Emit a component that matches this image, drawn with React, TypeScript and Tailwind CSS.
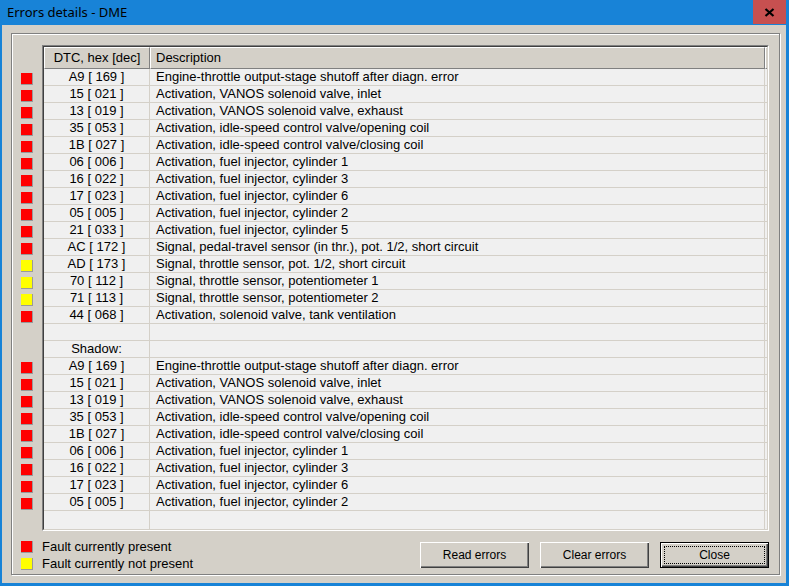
import React from "react";

type Row = { code: string; desc: string; color?: "red" | "yellow" };

const current: Row[] = [
  { code: "A9 [ 169 ]", desc: "Engine-throttle output-stage shutoff after diagn. error", color: "red" },
  { code: "15 [ 021 ]", desc: "Activation, VANOS solenoid valve, inlet", color: "red" },
  { code: "13 [ 019 ]", desc: "Activation, VANOS solenoid valve, exhaust", color: "red" },
  { code: "35 [ 053 ]", desc: "Activation, idle-speed control valve/opening coil", color: "red" },
  { code: "1B [ 027 ]", desc: "Activation, idle-speed control valve/closing coil", color: "red" },
  { code: "06 [ 006 ]", desc: "Activation, fuel injector, cylinder 1", color: "red" },
  { code: "16 [ 022 ]", desc: "Activation, fuel injector, cylinder 3", color: "red" },
  { code: "17 [ 023 ]", desc: "Activation, fuel injector, cylinder 6", color: "red" },
  { code: "05 [ 005 ]", desc: "Activation, fuel injector, cylinder 2", color: "red" },
  { code: "21 [ 033 ]", desc: "Activation, fuel injector, cylinder 5", color: "red" },
  { code: "AC [ 172 ]", desc: "Signal, pedal-travel sensor (in thr.), pot. 1/2, short circuit", color: "red" },
  { code: "AD [ 173 ]", desc: "Signal, throttle sensor, pot. 1/2, short circuit", color: "yellow" },
  { code: "70 [ 112 ]", desc: "Signal, throttle sensor, potentiometer 1", color: "yellow" },
  { code: "71 [ 113 ]", desc: "Signal, throttle sensor, potentiometer 2", color: "yellow" },
  { code: "44 [ 068 ]", desc: "Activation, solenoid valve, tank ventilation", color: "red" },
];

// shadow memory holds the first nine entries again
const rows: Row[] = [
  ...current,
  { code: "", desc: "" },
  { code: "Shadow:", desc: "" },
  ...current.slice(0, 9),
];

function Lamp({ color }: { color?: "red" | "yellow" }) {
  if (!color) return null;
  return (
    <div
      className={
        "w-[12px] h-[12px] border-r border-b border-[#9a9a9a] " +
        (color === "red" ? "bg-[#ff0000]" : "bg-[#ffff00]")
      }
    />
  );
}

function ClassicButton({ label, isDefault }: { label: string; isDefault?: boolean }) {
  if (isDefault) {
    return (
      <div className="w-[109px] h-[26px] border border-black">
        <div className="w-full h-full p-[3px] shadow-[inset_1px_1px_0_#fff,inset_-1px_-1px_0_#404040,inset_-2px_-2px_0_#808080]">
          <div className="w-full h-full border border-dotted border-black flex items-center justify-center">
            {label}
          </div>
        </div>
      </div>
    );
  }
  return (
    <div className="w-[109px] h-[26px] flex items-center justify-center shadow-[inset_1px_1px_0_#fff,inset_-1px_-1px_0_#404040,inset_-2px_-2px_0_#808080]">
      {label}
    </div>
  );
}

export default function App() {
  return (
    <div className="w-[789px] h-[586px] bg-[#1883d7] pl-[2px] pr-[3px] pb-[3px] flex flex-col font-['Liberation_Sans',Arial,sans-serif] text-[13px] text-black overflow-hidden">
      {/* title bar */}
      <div className="h-[25px] flex shrink-0">
        <div className="flex-1 flex items-center pl-[5px] font-['Noto_Sans','Open_Sans',sans-serif] text-[13px]">
          Errors details - DME
        </div>
        <div className="w-[33px] h-[24px] bg-[#c75050] flex items-center justify-center">
          <svg width="11" height="9" viewBox="0 0 11 9">
            <path d="M1.5 1 L9.5 8 M9.5 1 L1.5 8" stroke="#000" strokeWidth="2.2" />
          </svg>
        </div>
      </div>

      {/* client area */}
      <div className="flex-1 bg-[#d4d0c8] pt-[8px] pl-[9px]">
        <div className="w-[769px] h-[542px] border border-[#808080] shadow-[inset_1px_1px_0_#fff,1px_1px_0_#fff] flex flex-col pt-[11px]">
          {/* list section */}
          <div className="flex">
            <div className="w-[30px] pl-[9px] pt-[26px] flex flex-col">
              {rows.map((r, i) => (
                <div key={i} className="h-[17px] pt-[2px]">
                  <Lamp color={r.color} />
                </div>
              ))}
            </div>
            <div className="w-[727px] h-[486px] border border-t-[#808080] border-l-[#808080] border-r-white border-b-white">
              <div className="w-full h-full border border-t-[#404040] border-l-[#404040] border-r-[#d4d0c8] border-b-[#d4d0c8] bg-[#f0f0f0] flex flex-col overflow-hidden">
                {/* header */}
                <div className="h-[22px] flex shrink-0 bg-[#d4d0c8]">
                  <div className="w-[106px] flex items-center justify-center border-t border-l border-white border-r border-r-[#808080] border-b border-b-[#808080]">
                    DTC, hex [dec]
                  </div>
                  <div className="w-[615px] flex items-center pl-[5px] border-t border-l border-white border-r border-r-[#808080] border-b border-b-[#808080]">
                    Description
                  </div>
                  <div className="flex-1 border-t border-l border-white border-b border-b-[#808080]" />
                </div>
                {/* body */}
                <div className="flex-1 flex flex-col overflow-hidden">
                  {rows.map((r, i) => (
                    <div key={i} className="h-[17px] shrink-0 flex border-b border-[#d4d0c8]">
                      <div className="w-[106px] flex items-center justify-center border-r border-[#d4d0c8]">
                        {r.code}
                      </div>
                      <div className="w-[615px] flex items-center pl-[6px] border-r border-[#d4d0c8] whitespace-nowrap">
                        {r.desc}
                      </div>
                    </div>
                  ))}
                  <div className="flex-1 flex">
                    <div className="w-[106px] border-r border-[#d4d0c8]" />
                    <div className="w-[615px] border-r border-[#d4d0c8]" />
                  </div>
                </div>
              </div>
            </div>
          </div>

          {/* legend and buttons */}
          <div className="flex">
            <div className="flex flex-col pt-[7px] pl-[9px]">
              <div className="h-[17px] flex items-center">
                <div className="w-[21px]">
                  <Lamp color="red" />
                </div>
                <span>Fault currently present</span>
              </div>
              <div className="h-[17px] flex items-center">
                <div className="w-[21px]">
                  <Lamp color="yellow" />
                </div>
                <span>Fault currently not present</span>
              </div>
            </div>
            <div className="ml-auto flex gap-[11px] pt-[11px] pr-[10px] text-[12px]">
              <ClassicButton label="Read errors" />
              <ClassicButton label="Clear errors" />
              <ClassicButton label="Close" isDefault />
            </div>
          </div>
        </div>
      </div>
    </div>
  );
}
